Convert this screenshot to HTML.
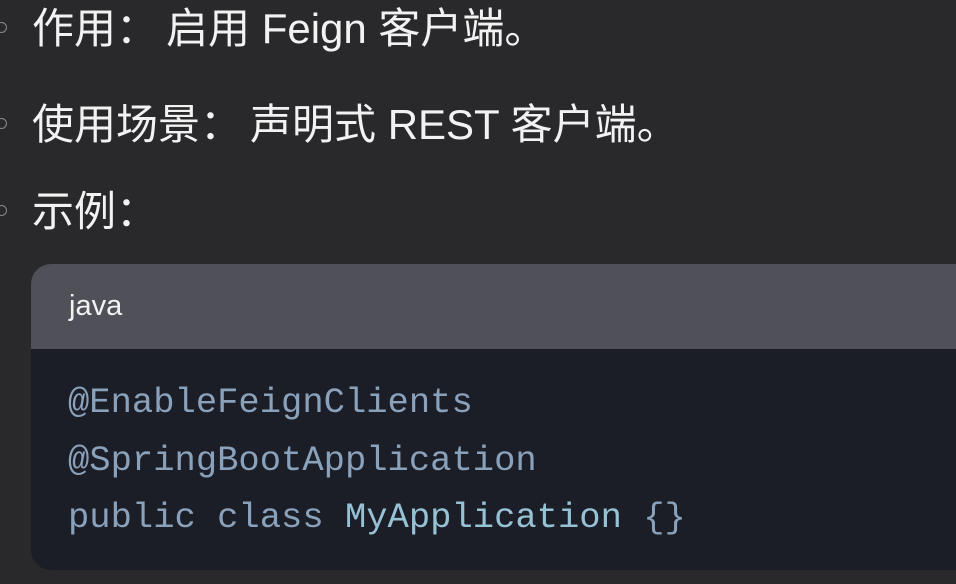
<!DOCTYPE html>
<html><head><meta charset="utf-8"><style>
html,body{margin:0;padding:0;width:956px;height:584px;overflow:hidden;background:#29292c;}
.t{position:absolute;left:32px;color:#f2f2f2;font-family:"Liberation Sans","Noto Sans CJK SC",sans-serif;font-size:42px;line-height:50px;white-space:nowrap;}
.k{margin-right:8px;}
.b{position:absolute;left:-4px;width:9px;height:9px;border:1.5px solid #8a8a8e;border-radius:50%;}
.cb{position:absolute;left:31px;top:264px;width:960px;height:306px;border-radius:20px;overflow:hidden;background:#1b1e26;}
.hd{height:85px;background:#505058;}
.hd span{position:absolute;left:38px;top:24px;color:#f2f2f2;font-family:"Liberation Sans",sans-serif;font-size:29px;line-height:36px;}
.code{position:absolute;left:37px;top:110px;font-family:"Liberation Mono",monospace;font-size:35.5px;line-height:57.5px;color:#8aa1bb;white-space:pre;}
.c{color:#97c2d6;}
</style></head><body>
<div class="b" style="top:22px"></div>
<div class="t" style="top:4px">作用<span class="k">：</span>启用 Feign 客户端。</div>
<div class="b" style="top:118px"></div>
<div class="t" style="top:100px">使用场景<span class="k">：</span>声明式 REST 客户端。</div>
<div class="b" style="top:205px"></div>
<div class="t" style="top:187px">示例：</div>
<div class="cb"><div class="hd"><span>java</span></div>
<div class="code">@EnableFeignClients
@SpringBootApplication
public class <span class="c">MyApplication</span> {}</div></div>
</body></html>
